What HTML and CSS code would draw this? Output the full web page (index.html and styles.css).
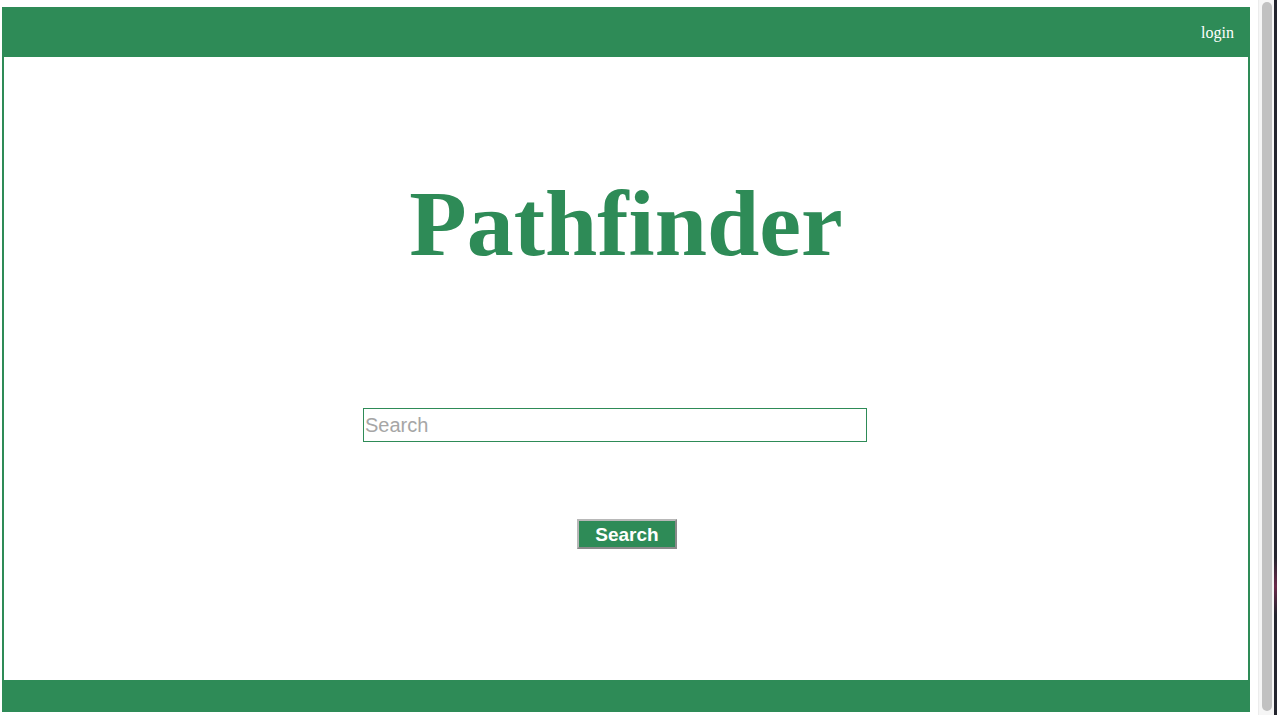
FILE: index.html
```html
<!DOCTYPE html>
<html>
<head>
<meta charset="utf-8">
<link rel="stylesheet" href="styles.css">
<title>Pathfinder</title>
</head>
<body>
<div class="window">
  <div class="page">
    <div class="frame">
      <header class="topbar"><a class="login" href="#">login</a></header>
      <main class="content">
        <h1 class="title">Pathfinder</h1>
        <input class="search-input" type="text" placeholder="Search">
        <button class="search-btn">Search</button>
      </main>
      <footer class="bottombar"></footer>
    </div>
  </div>
  <div class="scrollbar">
    <div class="track"><div class="thumb"></div></div>
    <div class="desk"></div>
  </div>
</div>
</body>
</html>
```
FILE: styles.css
```css
html, body {
  margin: 0;
  padding: 0;
  background: #ffffff;
}
.window {
  display: flex;
  height: 715px;
  overflow: hidden;
}
.page {
  flex: 1;
  padding: 7px 6px 3px 2px;
  display: flex;
}
.frame {
  flex: 1;
  display: flex;
  flex-direction: column;
  border-left: 2px solid #2e8b57;
  border-right: 2px solid #2e8b57;
}
.topbar {
  height: 50px;
  background: #2e8b57;
  display: flex;
  align-items: center;
  justify-content: flex-end;
  padding: 2px 16px 0 0;
  box-sizing: border-box;
  margin: 0 -2px;
}
.login {
  color: #ffffff;
  text-decoration: none;
  font-family: "Liberation Serif", "Times New Roman", serif;
  font-size: 16px;
}
.content {
  flex: 1;
  display: flex;
  flex-direction: column;
  align-items: center;
}
.title {
  margin: 113px 0 0 0;
  font-family: "Liberation Serif", "Times New Roman", serif;
  font-weight: bold;
  font-size: 94px;
  line-height: 106px;
  color: #2e8b57;
}
.search-input {
  margin: 132px 22px 0 0;
  width: 504px;
  height: 34px;
  box-sizing: border-box;
  border: 1px solid #2e8b57;
  padding: 0 1px;
  font-family: "Liberation Sans", Arial, sans-serif;
  font-size: 20px;
  color: #333;
  outline: none;
}
.search-input::placeholder {
  color: #a6a6a6;
}
.search-btn {
  margin: 77px 0 0 2px;
  width: 100px;
  height: 30px;
  box-sizing: border-box;
  background: #2e8b57;
  border: 2px solid;
  border-color: #b8b8b8 #8a8a8a #8a8a8a #b8b8b8;
  color: #ffffff;
  font-family: "Liberation Sans", Arial, sans-serif;
  font-weight: bold;
  font-size: 19px;
  padding: 2px 0 0 0;
  line-height: 24px;
}
.bottombar {
  height: 32px;
  background: #2e8b57;
  margin: 0 -2px;
}
.scrollbar {
  width: 21px;
  display: flex;
}
.track {
  flex: 1;
  background: #f6f6f6;
  border-left: 1px solid #ececec;
  margin-left: 2px;
  padding: 2px 2px 4px 3px;
  display: flex;
}
.thumb {
  flex: 1;
  background: #c1c1c1;
  border-radius: 5px;
}
.desk {
  width: 3px;
  background: linear-gradient(#23252e 0%, #23252e 78%, #6b2a4a 82%, #23252e 86%, #23252e 100%);
}
```
